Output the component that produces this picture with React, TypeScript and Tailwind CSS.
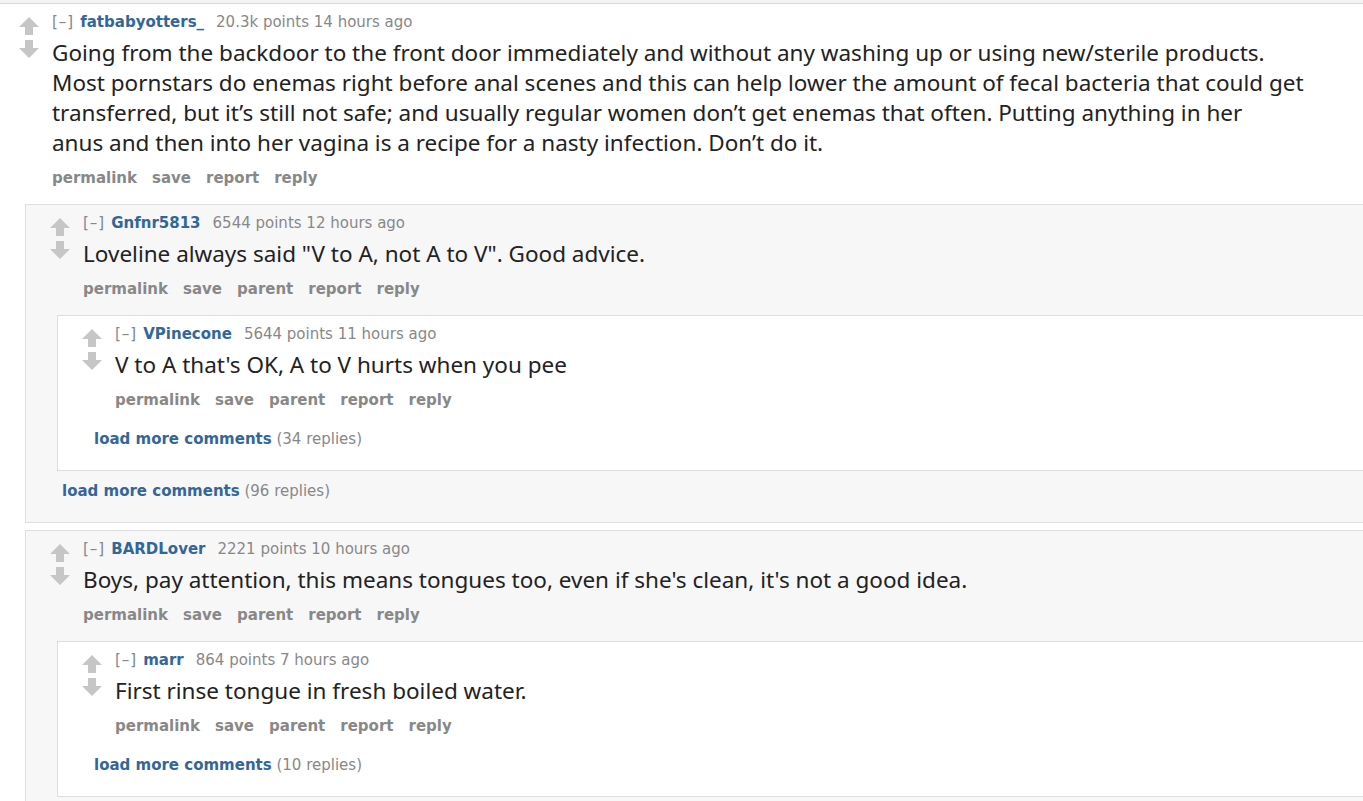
import React from "react";

type Comment = {
  author: string;
  score: string;
  time: string;
  lines: string[];
  buttons: string[];
  children?: Comment[];
  more?: string;
};

const thread: Comment = {
  author: "fatbabyotters_",
  score: "20.3k points",
  time: "14 hours ago",
  lines: [
    "Going from the backdoor to the front door immediately and without any washing up or using new/sterile products.",
    "Most pornstars do enemas right before anal scenes and this can help lower the amount of fecal bacteria that could get",
    "transferred, but it\u2019s still not safe; and usually regular women don\u2019t get enemas that often. Putting anything in her",
    "anus and then into her vagina is a recipe for a nasty infection. Don\u2019t do it.",
  ],
  buttons: ["permalink", "save", "report", "reply"],
  children: [
    {
      author: "Gnfnr5813",
      score: "6544 points",
      time: "12 hours ago",
      lines: ['Loveline always said "V to A, not A to V". Good advice.'],
      buttons: ["permalink", "save", "parent", "report", "reply"],
      more: "(96 replies)",
      children: [
        {
          author: "VPinecone",
          score: "5644 points",
          time: "11 hours ago",
          lines: ["V to A that's OK, A to V hurts when you pee"],
          buttons: ["permalink", "save", "parent", "report", "reply"],
          more: "(34 replies)",
        },
      ],
    },
    {
      author: "BARDLover",
      score: "2221 points",
      time: "10 hours ago",
      lines: ["Boys, pay attention, this means tongues too, even if she's clean, it's not a good idea."],
      buttons: ["permalink", "save", "parent", "report", "reply"],
      children: [
        {
          author: "marr",
          score: "864 points",
          time: "7 hours ago",
          lines: ["First rinse tongue in fresh boiled water."],
          buttons: ["permalink", "save", "parent", "report", "reply"],
          more: "(10 replies)",
        },
      ],
    },
  ],
};

function Arrow({ down }: { down?: boolean }) {
  return (
    <svg width="20" height="18" viewBox="0 0 20 18" className="block">
      <polygon
        fill="#c6c6c6"
        points={down ? "6,0 14,0 14,8 20,8 10,18 0,8 6,8" : "10,0 20,10 14,10 14,18 6,18 6,10 0,10"}
      />
    </svg>
  );
}

function LoadMore({ count, className }: { count: string; className: string }) {
  return (
    <div className={`h-[24px] leading-[24px] text-[15px] font-['DejaVu_Sans',sans-serif] ${className}`}>
      <span className="font-bold text-[#336699]">load more comments</span>{" "}
      <span className="text-[#888]">{count}</span>
    </div>
  );
}

function CommentNode({ c, depth }: { c: Comment; depth: number }) {
  const boxed = depth > 0;
  const box = !boxed
    ? "bg-white"
    : depth % 2 === 1
    ? "border border-[#dedede] bg-[#f7f7f8]"
    : "border border-[#dedede] bg-white";

  return (
    <div className={`${box} ${boxed ? "pt-[6px] pb-[19px]" : "pt-[6px]"}`}>
      <div className={`flex ${boxed ? "pl-[24px]" : "pl-[19px]"}`}>
        <div className="flex w-[20px] shrink-0 flex-col pt-[7px]">
          <Arrow />
          <div className="h-[5px]" />
          <Arrow down />
        </div>
        <div className="ml-[13px] min-w-0">
          <div className="h-[24px] whitespace-nowrap font-['DejaVu_Sans',sans-serif] text-[15px] leading-[24px]">
            <span className="tracking-[1px] text-[#808894]">[–]</span>
            <span className="ml-[6px] font-bold text-[#336699]">{c.author}</span>
            <span className="ml-[12px] text-[#888]">
              {c.score} {c.time}
            </span>
          </div>
          <div className="mt-[4px] font-['Noto_Sans',sans-serif] text-[22.5px] leading-[30px] text-[#222]">
            {c.lines.map((l, i) => (
              <div key={i} className="whitespace-nowrap">
                {l}
              </div>
            ))}
          </div>
          <div className="mt-[8px] flex h-[24px] gap-[15px] font-['DejaVu_Sans',sans-serif] text-[15px] font-bold leading-[24px] text-[#888]">
            {c.buttons.map((b) => (
              <span key={b}>{b}</span>
            ))}
          </div>
        </div>
      </div>
      {(c.children || c.more) && (
        <div className={boxed ? "ml-[31px]" : "ml-[25px]"}>
          {c.children && (
            <div className="mt-[14px] flex flex-col gap-[7px]">
              {c.children.map((ch) => (
                <CommentNode key={ch.author} c={ch} depth={depth + 1} />
              ))}
            </div>
          )}
          {c.more && (
            <LoadMore
              count={c.more}
              className={c.children ? "ml-[5px] mt-[8px]" : "ml-[5px] mt-[15px]"}
            />
          )}
        </div>
      )}
    </div>
  );
}

export default function App() {
  return (
    <div className="h-[801px] w-full overflow-hidden bg-white">
      <div className="h-[3px] bg-[#f3f3f3]" />
      <div className="h-px bg-[#d9d9d9]" />
      <div className="w-[1500px]">
        <CommentNode c={thread} depth={0} />
      </div>
    </div>
  );
}
